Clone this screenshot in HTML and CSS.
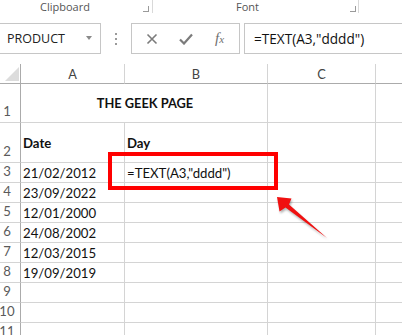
FILE: index.html
```html
<!DOCTYPE html>
<html lang="en">

<head>
    <meta charset="UTF-8">
    <title>Excel TEXT formula</title>
    <link rel="stylesheet" href="styles.css">
</head>

<body>
    <div class="ribbon">
        <div class="group clipboard">
            <span class="groupLabel">Clipboard</span>
            <span class="launcher"></span>
        </div>
        <div class="group font">
            <span class="groupLabel">Font</span>
            <span class="launcher"></span>
        </div>
    </div>

    <div class="formulaBar">
        <div class="nameBox">
            <span>PRODUCT</span>
            <span class="dropArrow"></span>
        </div>
        <div class="grip"><i></i><i></i><i></i></div>
        <div class="fxButtons">
            <svg class="fxIcon" width="12" height="12" viewBox="0 0 12 12">
                <path d="M1.5 1.5 L10.5 10.5 M10.5 1.5 L1.5 10.5" stroke="#7b7b7b" stroke-width="1.6" fill="none" />
            </svg>
            <svg class="fxIcon" width="14" height="12" viewBox="0 0 14 12">
                <path d="M1 6.5 L5 10.5 L13 1.5" stroke="#7b7b7b" stroke-width="2.2" fill="none" />
            </svg>
            <span class="fxText">f<small>x</small></span>
        </div>
        <div class="formulaInput">=TEXT(A3,"dddd")</div>
    </div>

    <div class="sheet">
        <div class="corner"><span class="selectAll"></span></div>
        <div class="colHead">A</div>
        <div class="colHead">B</div>
        <div class="colHead">C</div>
        <div class="colHead last"></div>

        <div class="rowHead">1</div>
        <div class="cell title">THE GEEK PAGE</div>
        <div class="cell"></div>
        <div class="cell last"></div>

        <div class="rowHead">2</div>
        <div class="cell bold">Date</div>
        <div class="cell bold">Day</div>
        <div class="cell"></div>
        <div class="cell last"></div>

        <div class="rowHead">3</div>
        <div class="cell">21/02/2012</div>
        <div class="cell">=TEXT(A3,"dddd")</div>
        <div class="cell"></div>
        <div class="cell last"></div>

        <div class="rowHead">4</div>
        <div class="cell">23/09/2022</div>
        <div class="cell"></div>
        <div class="cell"></div>
        <div class="cell last"></div>

        <div class="rowHead">5</div>
        <div class="cell">12/01/2000</div>
        <div class="cell"></div>
        <div class="cell"></div>
        <div class="cell last"></div>

        <div class="rowHead">6</div>
        <div class="cell">24/08/2002</div>
        <div class="cell"></div>
        <div class="cell"></div>
        <div class="cell last"></div>

        <div class="rowHead">7</div>
        <div class="cell">12/03/2015</div>
        <div class="cell"></div>
        <div class="cell"></div>
        <div class="cell last"></div>

        <div class="rowHead">8</div>
        <div class="cell">19/09/2019</div>
        <div class="cell"></div>
        <div class="cell"></div>
        <div class="cell last"></div>

        <div class="rowHead">9</div>
        <div class="cell"></div>
        <div class="cell"></div>
        <div class="cell"></div>
        <div class="cell last"></div>

        <div class="rowHead">10</div>
        <div class="cell"></div>
        <div class="cell"></div>
        <div class="cell"></div>
        <div class="cell last"></div>

        <div class="rowHead">11</div>
        <div class="cell"></div>
        <div class="cell"></div>
        <div class="cell"></div>
        <div class="cell last"></div>

        <!-- annotation on top of the grid -->
        <div class="highlight"></div>
        <svg class="arrow" width="70" height="60" viewBox="0 0 70 60">
            <polygon points="7,7 21.5,8.5 19,14.5 57,48 15.5,17.5 9.5,21.5" fill="#f01010" />
        </svg>
    </div>
</body>

</html>
```

FILE: styles.css
```css
* {
    margin: 0;
    padding: 0;
    box-sizing: border-box;
}

body {
    width: 402px;
    height: 335px;
    overflow: hidden;
    background-color: white;
    font-family: "Open Sans", sans-serif;
}

/* ribbon group labels */
.ribbon {
    display: flex;
    height: 15px;
    color: #555;
    font-size: 11px;
}

.group {
    display: flex;
    align-items: center;
    border-right: 1px solid #d9d9d9;
    height: 13px;
}

.clipboard {
    width: 153px;
    padding-left: 40px;
}

.font {
    width: 206px;
    padding-left: 83px;
}

.groupLabel {
    line-height: 13px;
}

.launcher {
    width: 6px;
    height: 6px;
    border: 1px solid #9a9a9a;
    border-top: none;
    border-left: none;
    margin-top: 4px;
}

.clipboard .launcher {
    margin-left: 53px;
}

.font .launcher {
    margin-left: 91px;
}

/* formula bar */
.formulaBar {
    display: flex;
    height: 31px;
    margin-top: 8px;
}

.nameBox {
    width: 101px;
    border: 1px solid #c6c6c6;
    border-left: none;
    display: flex;
    align-items: center;
    justify-content: space-between;
    padding: 0 8px 0 7px;
    font-size: 12.5px;
    color: #222;
}

.dropArrow {
    border-left: 3.5px solid transparent;
    border-right: 3.5px solid transparent;
    border-top: 4px solid #8a8a8a;
    margin-top: -2px;
}

.grip {
    width: 30px;
    display: flex;
    flex-direction: column;
    align-items: center;
    justify-content: center;
    gap: 3px;
}

.grip i {
    width: 2px;
    height: 2px;
    background-color: #9a9a9a;
}

.fxButtons {
    width: 109px;
    border: 1px solid #c6c6c6;
    display: flex;
    align-items: center;
    gap: 0;
    padding-left: 14px;
}

.fxIcon:nth-child(1) {
    margin-right: 21px;
}

.fxIcon:nth-child(2) {
    margin-right: 22px;
}

.fxText {
    font-family: "Liberation Serif", serif;
    font-style: italic;
    font-size: 15px;
    color: #6f6f6f;
}

.fxText small {
    font-size: 11px;
}

.formulaInput {
    flex: 1;
    margin-left: 4px;
    border: 1px solid #c6c6c6;
    border-right: none;
    padding-left: 9px;
    display: flex;
    align-items: center;
    font-size: 13.6px;
    color: #111;
}

/* worksheet */
.sheet {
    position: relative;
    margin-top: 10px;
    display: grid;
    grid-template-columns: 21px 104px 143px 108px 1fr;
    grid-template-rows: 20px 39px 40px repeat(9, 20px);
    font-family: Lato, sans-serif;
    font-size: 13.2px;
    color: #111;
}

.corner {
    border-right: 1px solid #ababab;
    border-bottom: 1px solid #ababab;
    position: relative;
}

.selectAll {
    position: absolute;
    right: 1px;
    bottom: 2px;
    border-left: 14px solid transparent;
    border-bottom: 14px solid #dcdcdc;
}

.colHead {
    border-right: 1px solid #d4d4d4;
    border-bottom: 1px solid #ababab;
    display: flex;
    align-items: center;
    justify-content: center;
    color: #444;
    font-size: 12.8px;
}

.rowHead {
    border-right: 1px solid #ababab;
    border-bottom: 1px solid #d4d4d4;
    display: flex;
    align-items: flex-end;
    justify-content: center;
    padding: 0 6px 3px 0;
    color: #5a5a5a;
}

.cell {
    border-right: 1px solid #d4d4d4;
    border-bottom: 1px solid #d4d4d4;
    display: flex;
    align-items: center;
    padding-left: 2px;
    white-space: nowrap;
}

.last {
    border-right: none;
}

.title {
    grid-column: span 2;
    justify-content: center;
    font-weight: bold;
    font-size: 12.8px;
}

.bold {
    font-weight: bold;
}

.highlight {
    position: absolute;
    left: 108px;
    top: 88px;
    width: 170px;
    height: 38px;
    border: 4px solid #ff0000;
}

.arrow {
    position: absolute;
    left: 270px;
    top: 126px;
    filter: drop-shadow(1px 2px 1px rgba(0, 0, 0, 0.3));
}
```
